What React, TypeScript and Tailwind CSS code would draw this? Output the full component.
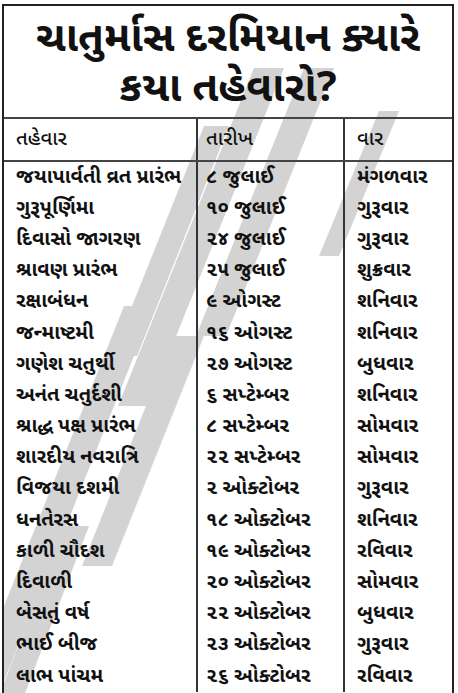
const rows: Array<[string, string, string]> = [
    ["જયાપાર્વતી વ્રત પ્રારંભ", "૮ જુલાઈ", "મંગળવાર"],
    ["ગુરૂપૂર્ણિમા", "૧૦ જુલાઈ", "ગુરૂવાર"],
    ["દિવાસો જાગરણ", "૨૪ જુલાઈ", "ગુરૂવાર"],
    ["શ્રાવણ પ્રારંભ", "૨૫ જુલાઈ", "શુક્રવાર"],
    ["રક્ષાબંધન", "૯ ઓગસ્ટ", "શનિવાર"],
    ["જન્માષ્ટમી", "૧૬ ઓગસ્ટ", "શનિવાર"],
    ["ગણેશ ચતુર્થી", "૨૭ ઓગસ્ટ", "બુધવાર"],
    ["અનંત ચતુર્દશી", "૬ સપ્ટેમ્બર", "શનિવાર"],
    ["શ્રાદ્ધ પક્ષ પ્રારંભ", "૮ સપ્ટેમ્બર", "સોમવાર"],
    ["શારદીય નવરાત્રિ", "૨૨ સપ્ટેમ્બર", "સોમવાર"],
    ["વિજયા દશમી", "૨ ઓક્ટોબર", "ગુરૂવાર"],
    ["ધનતેરસ", "૧૮ ઓક્ટોબર", "શનિવાર"],
    ["કાળી ચૌદશ", "૧૯ ઓક્ટોબર", "રવિવાર"],
    ["દિવાળી", "૨૦ ઓક્ટોબર", "સોમવાર"],
    ["બેસતું વર્ષ", "૨૨ ઓક્ટોબર", "બુધવાર"],
    ["ભાઈ બીજ", "૨૩ ઓક્ટોબર", "ગુરૂવાર"],
    ["લાભ પાંચમ", "૨૬ ઓક્ટોબર", "રવિવાર"],
]

export default function App() {
    return <div className="w-[458px] h-[693px] overflow-hidden bg-white pt-1 pl-[2px] pr-[4px] text-[#111]"
                style={{fontFamily: '"Noto Sans Gujarati", "Noto Sans", "Lohit Gujarati", sans-serif'}}>
        <div className="relative h-[700px] border-2 border-[#222] border-b-0">
            {/* watermark logo, faint grey slanted strokes */}
            <svg className="absolute inset-0 pointer-events-none" width="452" height="700" viewBox="0 0 452 700">
                <g fill="#d3d3d3">
                    <polygon points="250,62 280,62 144,400 114,400"/>
                    <polygon points="300,62 330,62 222,330 192,330"/>
                    <polygon points="375,105 395,105 335,250 315,250"/>
                    <polygon points="120,300 150,300 -6,690 -36,690"/>
                    <polygon points="170,330 200,330 108,560 78,560"/>
                    <polygon points="200,120 225,120 133,350 108,350"/>
                    <polygon points="60,520 85,520 20,690 -5,690"/>
                </g>
            </svg>
            <div className="relative">
                <h1 className="text-center font-bold text-[42px] leading-[50px] pt-[10px] pb-[1px] whitespace-nowrap">
                    <div>ચાતુર્માસ દરમિયાન ક્યારે</div>
                    <div>કયા તહેવારો?</div>
                </h1>
                <div className="grid grid-cols-[194px_147px_1fr] border-t-2 border-[#444]">
                    <div className="border-r-2 border-[#333] px-3 h-[41px] flex items-center text-[20px] font-medium">તહેવાર</div>
                    <div className="border-r-2 border-[#333] px-2 h-[41px] flex items-center text-[20px] font-medium">તારીખ</div>
                    <div className="px-3 h-[41px] flex items-center text-[20px] font-medium">વાર</div>
                </div>
                <div className="grid grid-cols-[194px_147px_1fr] border-t-2 border-[#444]">
                    <div className="border-r-2 border-[#333] px-3">
                        {rows.map((r, i) => <div key={i} className="h-[31.2px] flex items-center text-[20px] font-bold whitespace-nowrap">{r[0]}</div>)}
                    </div>
                    <div className="border-r-2 border-[#333] px-2">
                        {rows.map((r, i) => <div key={i} className="h-[31.2px] flex items-center text-[20px] font-bold whitespace-nowrap">{r[1]}</div>)}
                    </div>
                    <div className="px-3">
                        {rows.map((r, i) => <div key={i} className="h-[31.2px] flex items-center text-[20px] font-bold whitespace-nowrap">{r[2]}</div>)}
                    </div>
                </div>
            </div>
        </div>
    </div>
}
